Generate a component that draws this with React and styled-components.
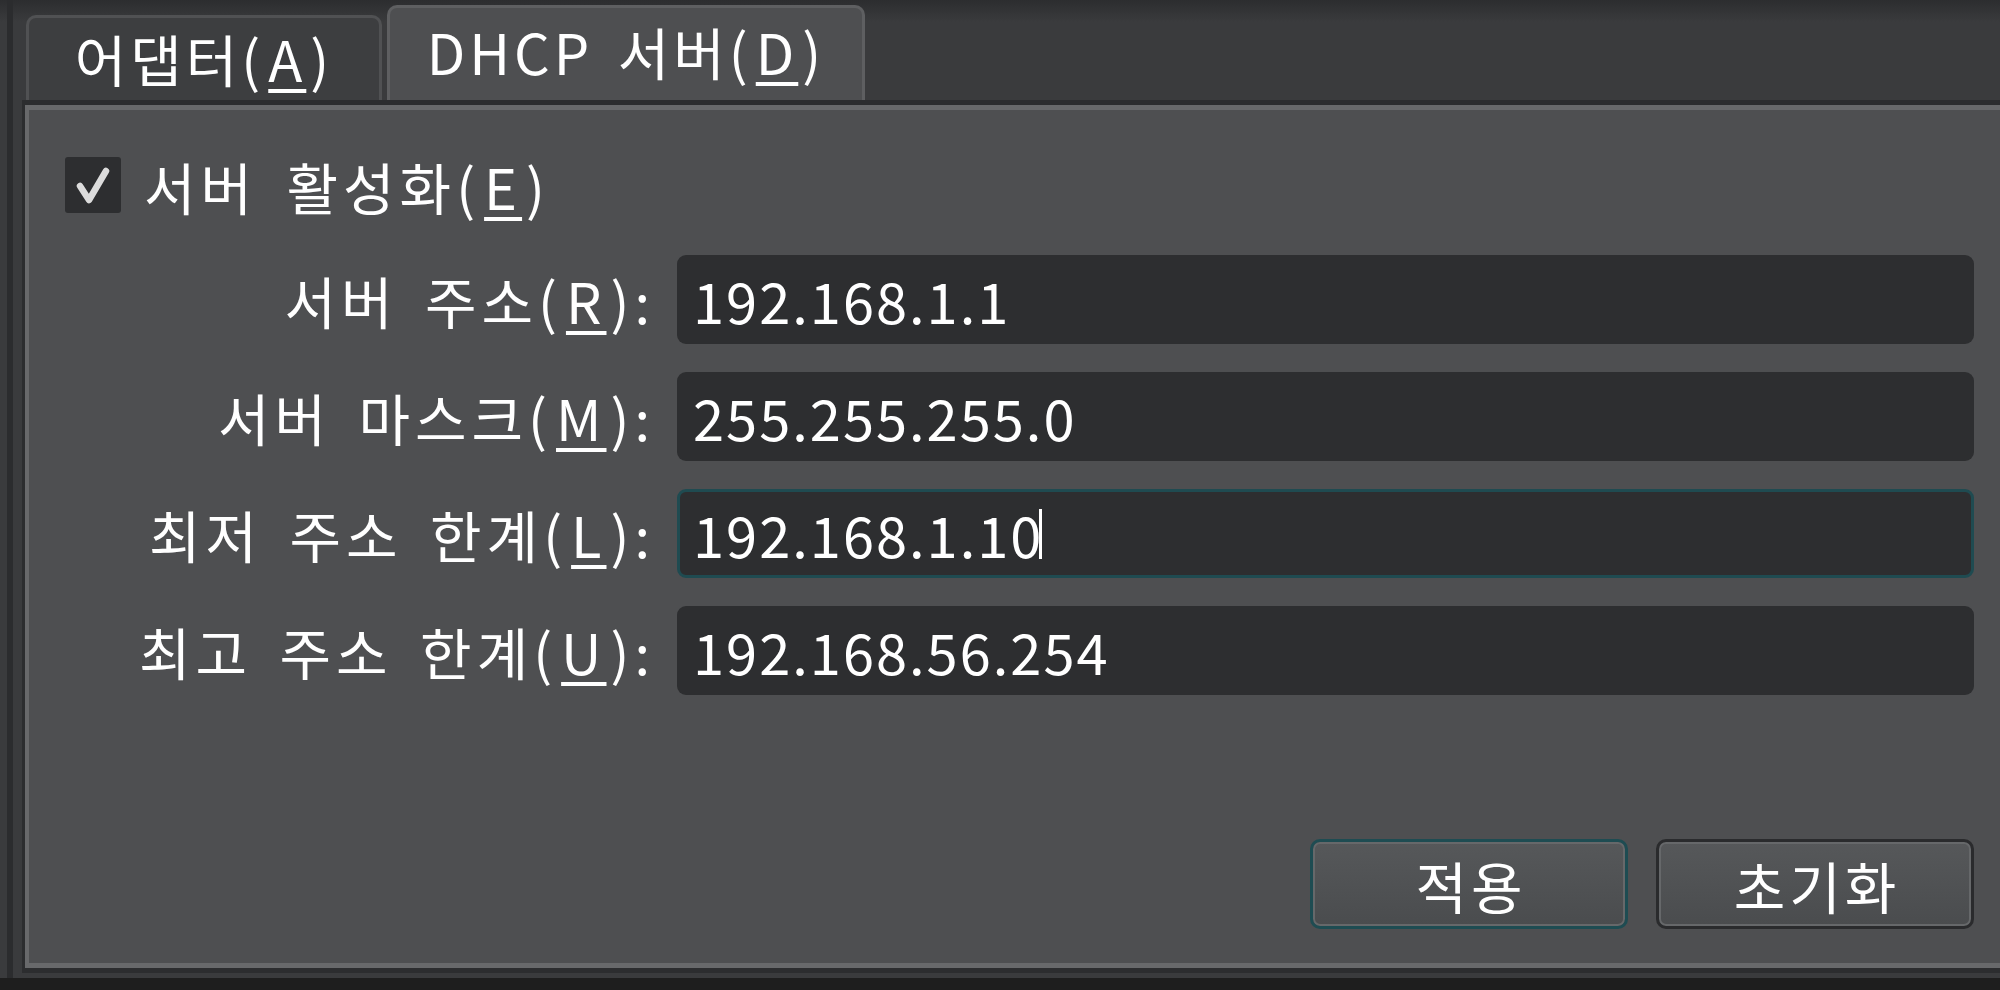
import React from "react";
import styled, { createGlobalStyle } from "styled-components";

const GlobalStyle = createGlobalStyle`
  html, body {
    margin: 0;
    padding: 0;
    background: #1e1e1e;
  }
  body {
    font-family: "Noto Sans CJK KR", "Noto Sans", sans-serif;
    color: #ffffff;
  }
`;

const Frame = styled.div`
  display: flex;
  flex-direction: column;
  width: 2000px;
  height: 990px;
  overflow: hidden;
  background: #1e1e1e;
`;

const Window = styled.div`
  box-sizing: border-box;
  height: 978px;
  display: flex;
  flex-direction: column;
  padding: 5px 0 5px 22px;
  background:
    linear-gradient(to right, transparent 7px, #2b2c2e 7px, #2b2c2e 13px, transparent 13px),
    linear-gradient(to bottom, #2c2d2f, #3a3b3d 22px);
`;

const TabBar = styled.div`
  display: flex;
  align-items: flex-end;
  gap: 5px;
  height: 95px;
  padding-left: 4px;
`;

const Tab = styled.div`
  box-sizing: border-box;
  width: ${(p) => p.$width}px;
  height: ${(p) => (p.$active ? 95 : 85)}px;
  display: flex;
  justify-content: center;
  padding-top: ${(p) => (p.$active ? 10 : 7)}px;
  border: 3px solid ${(p) => (p.$active ? "#5e5f61" : "#505153")};
  border-bottom: none;
  border-radius: 10px 10px 0 0;
  background: ${(p) => (p.$active ? "#4e4f51" : "#3d3e40")};
  font-size: 56px;
  line-height: 66px;
  letter-spacing: 4px;
  word-spacing: 8px;
  white-space: nowrap;
`;

const Panel = styled.div`
  flex: 1;
  display: flex;
  flex-direction: column;
  border: 5px solid #2c2d2f;
  border-left-width: 3px;
  border-right: none;
  box-shadow: inset 4px 5px 0 #68696b, inset 0 -5px 0 #68696b;
  background: #4e4f51;
  padding: 52px 26px 39px 40px;
`;

const CheckRow = styled.label`
  display: flex;
  align-items: center;
  gap: 23px;
  height: 56px;
  font-size: 56px;
  letter-spacing: 5px;
  word-spacing: 12px;
  white-space: nowrap;
`;

const CheckBox = styled.span`
  flex: none;
  width: 56px;
  height: 56px;
  border-radius: 3px;
  background: #2d2e30;
  display: flex;
  align-items: center;
  justify-content: center;
`;

const Fields = styled.div`
  display: grid;
  grid-template-columns: 585px 1fr;
  column-gap: 27px;
  row-gap: 28px;
  margin-top: 42px;
`;

const Label = styled.div`
  align-self: center;
  text-align: right;
  margin-right: -5px;
  font-size: 56px;
  letter-spacing: 5px;
  word-spacing: 10px;
  white-space: nowrap;
`;

const Field = styled.div`
  box-sizing: border-box;
  height: 89px;
  display: flex;
  align-items: center;
  padding-left: 13px;
  border: 3px solid ${(p) => (p.$focused ? "#1f4b51" : "transparent")};
  border-radius: 9px;
  background: #2d2e30;
  font-size: 56px;
  letter-spacing: 2px;
`;

const Caret = styled.span`
  display: inline-block;
  width: 3px;
  height: 50px;
  margin-left: -4px;
  background: #ffffff;
`;

const Buttons = styled.div`
  margin-top: auto;
  display: flex;
  justify-content: flex-end;
  gap: 28px;
`;

const Button = styled.button`
  box-sizing: border-box;
  width: 318px;
  height: 90px;
  border: 3px solid ${(p) => (p.$primary ? "#1e4c52" : "#2a2b2d")};
  border-radius: 10px;
  box-shadow: inset 0 0 0 2px #66686a;
  background: linear-gradient(to bottom, #56585a, #4a4c4e);
  color: #ffffff;
  font-family: inherit;
  font-size: 56px;
  letter-spacing: 4px;
  padding: 0 0 0 4px;
`;

const Key = styled.span`
  margin: 0 4px;
  text-decoration: underline;
  text-decoration-thickness: 4px;
  text-underline-offset: 7px;
`;

const fields = [
  { label: "서버 주소", key: "R", value: "192.168.1.1" },
  { label: "서버 마스크", key: "M", value: "255.255.255.0" },
  { label: "최저 주소 한계", key: "L", value: "192.168.1.10", focused: true },
  { label: "최고 주소 한계", key: "U", value: "192.168.56.254" },
];

const Check = () => (
  <svg width="36" height="38" viewBox="0 0 36 38">
    <path
      d="M5 20 L14 34 L31 5"
      fill="none"
      stroke="#dcdcdc"
      strokeWidth="6.5"
      strokeLinecap="round"
      strokeLinejoin="round"
    />
  </svg>
);

export default function App() {
  return (
    <>
      <GlobalStyle />
      <Frame>
        <Window>
          <TabBar>
            <Tab $width={356}>
              어댑터(<Key>A</Key>)
            </Tab>
            <Tab $width={478} $active>
              DHCP 서버(<Key>D</Key>)
            </Tab>
          </TabBar>
          <Panel>
            <CheckRow>
              <CheckBox>
                <Check />
              </CheckBox>
              <span>
                서버 활성화(<Key>E</Key>)
              </span>
            </CheckRow>
            <Fields>
              {fields.map((f) => (
                <React.Fragment key={f.key}>
                  <Label>
                    {f.label}(<Key>{f.key}</Key>):
                  </Label>
                  <Field $focused={f.focused}>
                    <span>{f.value}</span>
                    {f.focused && <Caret />}
                  </Field>
                </React.Fragment>
              ))}
            </Fields>
            <Buttons>
              <Button $primary>적용</Button>
              <Button>초기화</Button>
            </Buttons>
          </Panel>
        </Window>
      </Frame>
    </>
  );
}
